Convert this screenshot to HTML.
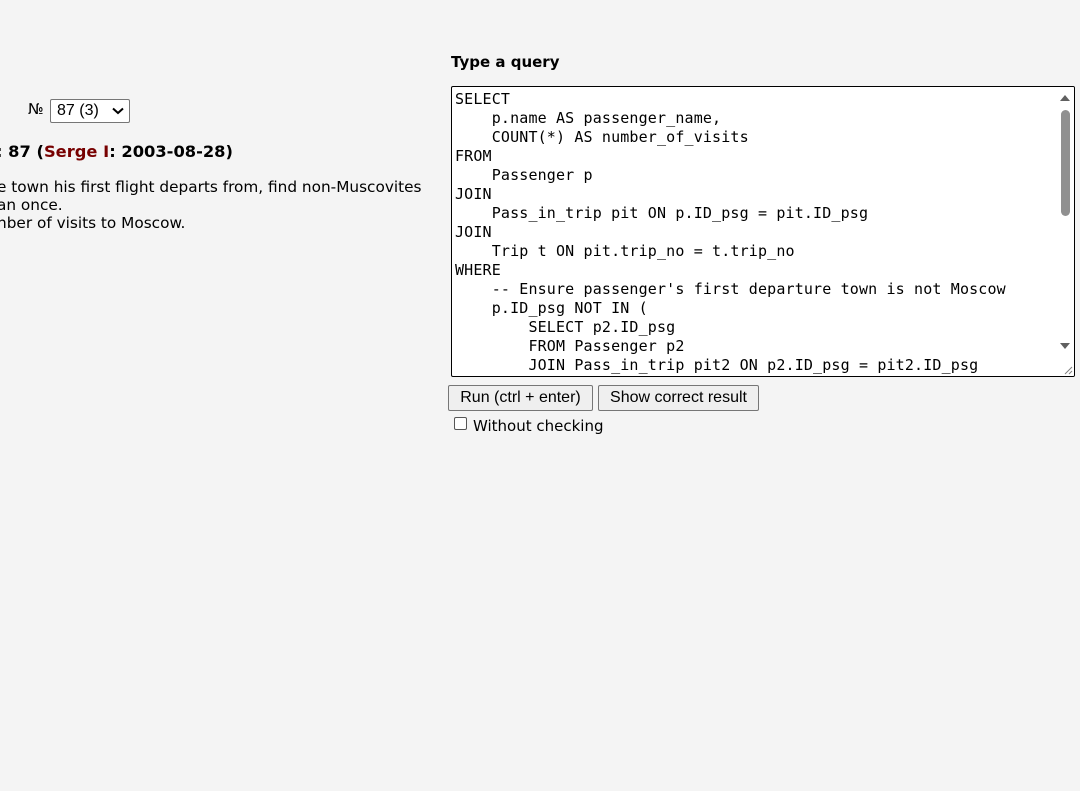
<!DOCTYPE html>
<html><head><style>
body{margin:0;width:1080px;height:791px;background:#f4f4f4;font-family:"DejaVu Sans","Liberation Sans",sans-serif;color:#000;position:relative;overflow:hidden}
.a{position:absolute;white-space:pre}
.ta{position:absolute;left:451px;top:86px;width:622px;height:289px;border:1.5px solid #000;border-radius:2px;background:#fff;overflow:hidden}
.code{position:absolute;left:3px;top:3px;font-family:"DejaVu Sans Mono","Liberation Mono",monospace;font-size:15px;letter-spacing:0.15px;line-height:19px;white-space:pre;color:#000}
.btn{position:absolute;top:385px;height:24px;border:1px solid #767676;border-radius:2px;background:#efefef;font-family:"Liberation Sans",sans-serif;font-size:16px;line-height:24px;text-align:center}
</style></head><body>
<div class="a" style="left:451px;top:53px;font-size:15px;font-weight:bold">Type a query</div>
<div class="a" style="left:28px;top:100px;font-size:15px">№</div>
<div style="position:absolute;left:50px;top:99px;width:78px;height:22px;border:1px solid #767676;border-radius:2px;background:#fff;font-family:'Liberation Sans',sans-serif;font-size:16px;line-height:22px"><span style="margin-left:6px">87 (3)</span><svg style="position:absolute;right:5px;top:7px" width="12" height="8"><path d="M1 1.5L6 6L11 1.5" stroke="#000" stroke-width="2" fill="none"/></svg></div>
<div class="a" style="left:-4px;top:142px;font-size:16.3px;font-weight:bold">: 87 (<span style="color:#700">Serge I</span>: 2003-08-28)</div>
<div class="a" style="left:-3px;top:178px;font-size:15.3px;line-height:18px">e town his first flight departs from, find non-Muscovites
an once.
nber of visits to Moscow.</div>
<div class="ta"><div class="code">SELECT
    p.name AS passenger_name,
    COUNT(*) AS number_of_visits
FROM
    Passenger p
JOIN
    Pass_in_trip pit ON p.ID_psg = pit.ID_psg
JOIN
    Trip t ON pit.trip_no = t.trip_no
WHERE
    -- Ensure passenger's first departure town is not Moscow
    p.ID_psg NOT IN (
        SELECT p2.ID_psg
        FROM Passenger p2
        JOIN Pass_in_trip pit2 ON p2.ID_psg = pit2.ID_psg</div>
<div style="position:absolute;right:0;top:0;width:17px;height:289px;background:#fff"></div>
<svg style="position:absolute;right:3px;top:5px" width="12" height="10"><path d="M1 9L6 3L11 9Z" fill="#606060"/></svg>
<div style="position:absolute;right:4px;top:23px;width:9px;height:106px;background:#909090;border-radius:5px"></div>
<svg style="position:absolute;right:3px;top:255px" width="12" height="10"><path d="M1 1L6 7L11 1Z" fill="#606060"/></svg>
<svg style="position:absolute;right:1px;bottom:1px" width="10" height="10"><path d="M9 2L2 9M9 6L6 9" stroke="#808080"/></svg>
</div>
<div class="btn" style="left:448px;width:143px">Run (ctrl + enter)</div>
<div class="btn" style="left:598px;width:159px">Show correct result</div>
<div style="position:absolute;left:454px;top:417px;width:11px;height:11px;border:1px solid #555;border-radius:2px;background:#fff"></div>
<div class="a" style="left:473px;top:417px;font-size:15px">Without checking</div>
</body></html>
